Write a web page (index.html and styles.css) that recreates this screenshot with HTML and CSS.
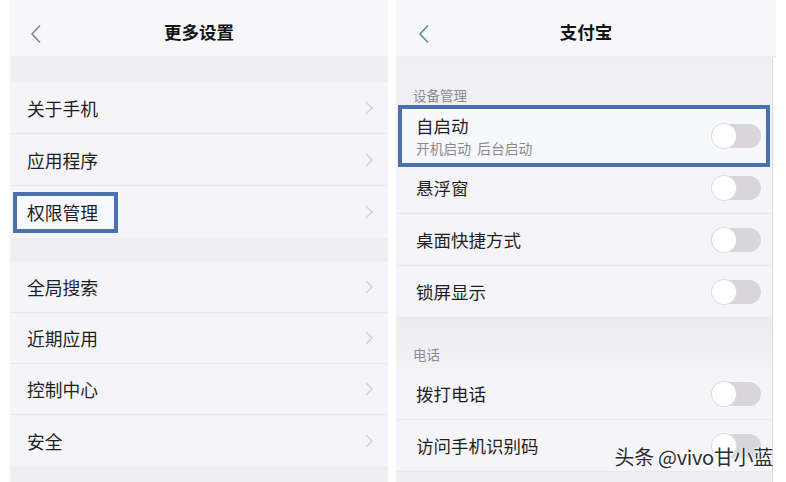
FILE: index.html
```html
<!DOCTYPE html>
<html lang="zh">
<head>
<meta charset="utf-8">
<link rel="stylesheet" href="styles.css">
</head>
<body>
<div class="stage">
  <section class="panel panel-left">
    <header class="topbar">
      <svg class="back" width="14" height="20" viewBox="0 0 14 20"><path d="M11 1.5 L3 10 L11 18.5" fill="none" stroke="#7d8a90" stroke-width="1.6"/></svg>
      <h1 class="title">更多设置</h1>
    </header>
    <div class="band band-top"></div>
    <div class="group">
      <div class="row"><span>关于手机</span><svg class="chev" width="8" height="14" viewBox="0 0 8 14"><path d="M1 1 L7 7 L1 13" fill="none" stroke="#cfcfd3" stroke-width="1.4"/></svg></div>
      <div class="row"><span>应用程序</span><svg class="chev" width="8" height="14" viewBox="0 0 8 14"><path d="M1 1 L7 7 L1 13" fill="none" stroke="#cfcfd3" stroke-width="1.4"/></svg></div>
      <div class="row"><span class="hl-label">权限管理</span><svg class="chev" width="8" height="14" viewBox="0 0 8 14"><path d="M1 1 L7 7 L1 13" fill="none" stroke="#cfcfd3" stroke-width="1.4"/></svg></div>
    </div>
    <div class="band band-mid"></div>
    <div class="group group-lower">
      <div class="row"><span>全局搜索</span><svg class="chev" width="8" height="14" viewBox="0 0 8 14"><path d="M1 1 L7 7 L1 13" fill="none" stroke="#cfcfd3" stroke-width="1.4"/></svg></div>
      <div class="row"><span>近期应用</span><svg class="chev" width="8" height="14" viewBox="0 0 8 14"><path d="M1 1 L7 7 L1 13" fill="none" stroke="#cfcfd3" stroke-width="1.4"/></svg></div>
      <div class="row"><span>控制中心</span><svg class="chev" width="8" height="14" viewBox="0 0 8 14"><path d="M1 1 L7 7 L1 13" fill="none" stroke="#cfcfd3" stroke-width="1.4"/></svg></div>
      <div class="row"><span>安全</span><svg class="chev" width="8" height="14" viewBox="0 0 8 14"><path d="M1 1 L7 7 L1 13" fill="none" stroke="#cfcfd3" stroke-width="1.4"/></svg></div>
    </div>
    <div class="band band-fill"></div>
  </section>

  <section class="panel panel-right">
    <header class="topbar">
      <svg class="back" width="14" height="20" viewBox="0 0 14 20"><path d="M11 1.5 L3 10 L11 18.5" fill="none" stroke="#5e8fa0" stroke-width="1.6"/></svg>
      <h1 class="title">支付宝</h1>
    </header>
    <div class="body">
      <div class="section-head sh-first">设备管理</div>
      <div class="trow trow-hl">
        <div class="tlabel">
          <span class="tmain">自启动</span>
          <span class="tsub">开机启动&nbsp;&nbsp;后台启动</span>
        </div>
        <span class="toggle"></span>
      </div>
      <div class="trow"><span class="tmain">悬浮窗</span><span class="toggle"></span></div>
      <div class="trow"><span class="tmain">桌面快捷方式</span><span class="toggle"></span></div>
      <div class="trow"><span class="tmain">锁屏显示</span><span class="toggle"></span></div>
      <div class="section-head sh-second">电话</div>
      <div class="trow"><span class="tmain">拨打电话</span><span class="toggle"></span></div>
      <div class="trow"><span class="tmain">访问手机识别码</span><span class="toggle"></span></div>
      <div class="rfill"></div>
    </div>
    <div class="watermark">头条 @vivo甘小蓝</div>
  </section>
</div>
</body>
</html>
```
FILE: styles.css
```css
* { box-sizing: border-box; }
html, body {
  margin: 0;
  padding: 0;
  background: #ffffff;
  width: 786px;
  height: 482px;
  overflow: hidden;
  font-family: "Noto Sans CJK SC", "Noto Sans", sans-serif;
  color: #1f1f22;
}
.stage {
  display: flex;
  gap: 8px;
  padding-left: 10px;
  height: 482px;
}
.panel {
  display: flex;
  flex-direction: column;
  height: 482px;
  position: relative;
}
.panel-left { width: 378px; background: #f4f3f7; }
.panel-right { width: 380px; background: #ffffff; }

.topbar {
  height: 57px;
  flex: none;
  background: #f7f7f9;
  display: flex;
  align-items: center;
  justify-content: center;
  position: relative;
  border-bottom: 1px solid #eeeef0;
}
.back { position: absolute; top: 24px; }
.panel-left .back { left: 19px; }
.panel-right .back { left: 21px; }
.title {
  margin: 0;
  font-size: 17.5px;
  font-weight: 600;
  color: #141416;
  line-height: 1;
  padding-top: 8px;
}

.band { background: #efeff2; flex: none; }
.band-top { height: 25px; }
.band-mid { height: 24px; }
.band-fill { flex: 1; }

.group { background: #f5f4f8; flex: none; }
.row {
  height: 52px;
  display: flex;
  align-items: center;
  justify-content: space-between;
  padding: 0 15px 0 17px;
  font-size: 17.75px;
  border-bottom: 1px solid #e9e8ee;
}
.group-lower .row { height: 51px; }
.row:last-child { border-bottom: none; }
.chev { flex: none; }

.hl-label {
  display: inline-block;
  border: 4px solid #4a70ad;
  background: #f8f9fd;
  padding: 5px 16px 5px 10px;
  margin-left: -14px;
  line-height: 23px;
}

.body {
  flex: 1;
  display: flex;
  flex-direction: column;
  background: #f4f3f7;
  margin-right: 3px;
  border-right: 1px solid #d9d9de;
}
.section-head {
  background: #f0f0f3;
  font-size: 13.5px;
  color: #8a8a90;
  padding-left: 17px;
  display: flex;
  align-items: flex-end;
  flex: none;
}
.sh-first { height: 48px; padding-bottom: 0; }
.sh-second { height: 50px; padding-bottom: 4px; background: linear-gradient(#ececef, #f2f2f5); }

.trow {
  height: 52px;
  flex: none;
  display: flex;
  align-items: center;
  justify-content: space-between;
  padding: 0 11px 0 20px;
  border-bottom: 1px solid #e9e8ee;
  background: #f5f4f8;
}
.trow-hl {
  height: 62px;
  margin: 0 2px -5px;
  border: 4px solid #4a70ad;
  padding: 0 5px 0 14px;
  background: #f7f8fc;
  position: relative;
  z-index: 1;
}
.tlabel { display: flex; flex-direction: column; }
.tmain { font-size: 17.5px; line-height: 22px; }
.tsub { font-size: 13.75px; color: #8a8a90; line-height: 20px; margin-top: 1px; }

.toggle {
  width: 49px;
  height: 24px;
  border-radius: 12px;
  background: #d8d6db;
  position: relative;
  flex: none;
}
.toggle::before {
  content: "";
  position: absolute;
  left: 0;
  top: 0;
  width: 24px;
  height: 24px;
  border-radius: 50%;
  background: #ffffff;
  box-shadow: 0 0 0 1px #dcdbe0;
}
.rfill { flex: 1; background: #efeff2; }

.watermark {
  position: absolute;
  right: 3px;
  bottom: 11px;
  font-size: 20px;
  color: #2c2c30;
  letter-spacing: -0.3px;
  text-shadow: 0 0 2px #ffffff, 0 0 2px #ffffff, 0 0 3px #ffffff;
  white-space: nowrap;
}
```
